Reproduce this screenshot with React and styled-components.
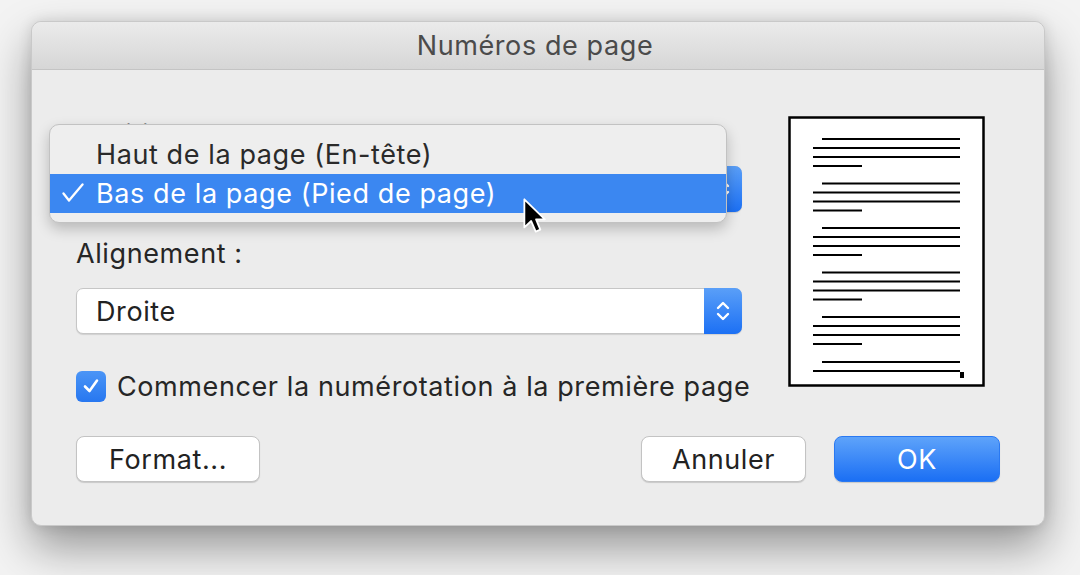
import React from "react";
import styled, { createGlobalStyle } from "styled-components";

const GlobalStyle = createGlobalStyle`
  html, body {
    margin: 0;
    padding: 0;
    background: #f3f3f3;
    font-family: Inter, "Liberation Sans", Arial, sans-serif;
    letter-spacing: 0.6px;
    overflow: hidden;
  }
`;

const Page = styled.div`
  width: 1080px;
  height: 575px;
  padding: 21px 0 0 31px;
  box-sizing: border-box;
`;

const Dialog = styled.div`
  position: relative;
  width: 1014px;
  height: 505px;
  background: #ececec;
  border: 1px solid #c9c9c9;
  border-radius: 10px;
  box-sizing: border-box;
  box-shadow: 0 22px 45px rgba(0, 0, 0, 0.38), 0 0 14px rgba(0, 0, 0, 0.12);
  display: flex;
  flex-direction: column;
`;

const TitleBar = styled.div`
  height: 47px;
  border-bottom: 1px solid #c4c4c4;
  border-radius: 10px 10px 0 0;
  background: linear-gradient(#ebebeb, #d6d6d6);
  display: flex;
  align-items: center;
  justify-content: center;
  font-size: 27px;
  color: #4b4b4b;
  padding-right: 6px;
`;

const Body = styled.div`
  padding: 44px 44px 0 44px;
  display: flex;
  flex-direction: column;
`;

const TopRow = styled.div`
  display: flex;
  gap: 46px;
`;

const Form = styled.div`
  width: 666px;
  display: flex;
  flex-direction: column;
`;

const Label = styled.div`
  height: 30px;
  line-height: 30px;
  font-size: 27px;
  color: #262626;
  margin-top: ${(p) => p.$gap || 0}px;
  padding-top: ${(p) => p.$drop || 3}px;
  box-sizing: border-box;
`;

const Select = styled.div`
  position: relative;
  margin-top: 22px;
  height: 46px;
  background: #fff;
  border: 1px solid #c6c6c6;
  border-radius: 7px;
  box-sizing: border-box;
  box-shadow: 0 1px 1px rgba(0, 0, 0, 0.12);
  display: flex;
  align-items: center;
  font-size: 27px;
  color: #222;
  padding-left: 19px;
`;

const Stepper = styled.div`
  position: absolute;
  right: -1px;
  top: -1px;
  bottom: -1px;
  width: 38px;
  border-radius: 0 7px 7px 0;
  background: linear-gradient(#5a9ff8, #1c70f4);
  display: flex;
  align-items: center;
  justify-content: center;
`;

const CheckRow = styled.label`
  margin-top: 36px;
  height: 32px;
  display: flex;
  align-items: center;
  gap: 11px;
  font-size: 27px;
  color: #262626;
  white-space: nowrap;
`;

const CheckBox = styled.span`
  width: 30px;
  height: 31px;
  flex-shrink: 0;
  border-radius: 6px;
  background: linear-gradient(#4b95f6, #2777f0);
  display: flex;
  align-items: center;
  justify-content: center;
`;

const Preview = styled.div`
  margin-top: 2px;
  width: 197px;
  height: 271px;
`;

const ButtonRow = styled.div`
  margin-top: 34px;
  display: flex;
  align-items: center;
`;

const Button = styled.button`
  height: 46px;
  width: ${(p) => p.$w}px;
  margin-left: ${(p) => p.$ml || 0}px;
  border-radius: 8px;
  font-family: inherit;
  letter-spacing: inherit;
  font-size: 27px;
  padding: 0;
  border: 1px solid ${(p) => (p.$primary ? "#2a79f2" : "#c3c3c3")};
  background: ${(p) => (p.$primary ? "linear-gradient(#5ea3fa, #1b6ff4)" : "#fff")};
  color: ${(p) => (p.$primary ? "#fff" : "#222")};
  box-shadow: 0 1px 1px rgba(0, 0, 0, 0.15);
`;

const Spacer = styled.div`
  flex: 1;
`;

const Menu = styled.div`
  position: absolute;
  left: 17px;
  top: 102px;
  width: 678px;
  padding: 10px 0 9px;
  background: #eeeeee;
  border: 1px solid #c2c2c2;
  border-radius: 10px;
  box-sizing: border-box;
  box-shadow: 0 6px 14px rgba(0, 0, 0, 0.22);
`;

const MenuItem = styled.div`
  height: 39px;
  display: flex;
  align-items: center;
  padding-left: 46px;
  position: relative;
  font-size: 27px;
  color: ${(p) => (p.$active ? "#fff" : "#2a2a2a")};
  background: ${(p) => (p.$active ? "#3b87f1" : "transparent")};
`;

const Tick = styled.svg`
  position: absolute;
  left: 12px;
  top: 9px;
`;

const Cursor = styled.svg`
  position: absolute;
  left: 490px;
  top: 175px;
`;

function Chevrons() {
  return (
    <svg width="16" height="26" viewBox="0 0 16 26">
      <path d="M3 10 L8 5 L13 10" fill="none" stroke="#fff" strokeWidth="2.4" strokeLinecap="round" strokeLinejoin="round" />
      <path d="M3 16 L8 21 L13 16" fill="none" stroke="#fff" strokeWidth="2.4" strokeLinecap="round" strokeLinejoin="round" />
    </svg>
  );
}

function PagePreview() {
  const groups = [139, 183.5, 228, 272.5, 317];
  const lines = [];
  groups.forEach((y0) => {
    const y = y0 - 116;
    lines.push([34, 172, y]);
    lines.push([25, 172, y + 9]);
    lines.push([25, 172, y + 18]);
    lines.push([25, 74, y + 27]);
  });
  lines.push([34, 172, 246]);
  lines.push([25, 172, 255]);
  return (
    <svg width="197" height="271" viewBox="0 0 197 271">
      <rect x="1.5" y="1.5" width="194" height="268" fill="#fff" stroke="#000" strokeWidth="2.5" />
      {lines.map(([x1, x2, y], i) => (
        <line key={i} x1={x1} x2={x2} y1={y} y2={y} stroke="#000" strokeWidth="2" />
      ))}
      <rect x="172" y="256" width="4" height="6" fill="#000" />
    </svg>
  );
}

export default function App() {
  return (
    <Page>
      <GlobalStyle />
      <Dialog>
        <TitleBar>Numéros de page</TitleBar>
        <Body>
          <TopRow>
            <Form>
              <Label $drop={6}>Position :</Label>
              <Select>
                Bas de la page (Pied de page)
                <Stepper>
                  <Chevrons />
                </Stepper>
              </Select>
              <Label $gap={24}>Alignement :</Label>
              <Select>
                Droite
                <Stepper>
                  <Chevrons />
                </Stepper>
              </Select>
              <CheckRow>
                <CheckBox>
                  <svg width="20" height="20" viewBox="0 0 20 20">
                    <path d="M4 10.5 L8.5 15 L16 4.5" fill="none" stroke="#fff" strokeWidth="2.6" strokeLinecap="round" strokeLinejoin="round" />
                  </svg>
                </CheckBox>
                Commencer la numérotation à la première page
              </CheckRow>
            </Form>
            <Preview>
              <PagePreview />
            </Preview>
          </TopRow>
          <ButtonRow>
            <Button $w={184}>Format...</Button>
            <Spacer />
            <Button $w={165}>Annuler</Button>
            <Button $w={166} $ml={28} $primary>
              OK
            </Button>
          </ButtonRow>
        </Body>

        <Menu>
          <MenuItem>Haut de la page (En-tête)</MenuItem>
          <MenuItem $active>
            <Tick width="22" height="20" viewBox="0 0 22 20">
              <path d="M1.5 10.5 L7 17.5 L20.5 1.5" fill="none" stroke="#fff" strokeWidth="2.3" strokeLinecap="round" strokeLinejoin="round" />
            </Tick>
            Bas de la page (Pied de page)
          </MenuItem>
        </Menu>

        <Cursor width="26" height="38" viewBox="0 0 17 25">
          <path d="M1.5 1.5 L1.5 20 L6 15.8 L9 22.8 L12 21.5 L9.2 14.7 L15 14.7 Z" fill="#000" stroke="#fff" strokeWidth="1.2" strokeLinejoin="round" />
        </Cursor>
      </Dialog>
    </Page>
  );
}
